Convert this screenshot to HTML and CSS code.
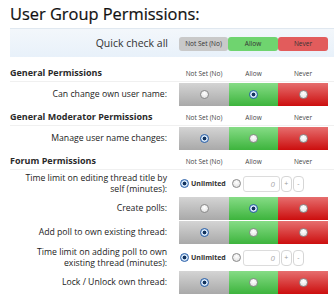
FILE: index.html
```html
<!DOCTYPE html>
<html lang="en">
<head>
  <meta charset="UTF-8" />
  <title>User Group Permissions</title>
  <link rel="stylesheet" href="styles.css">
</head>
<body>
  <div class="page">
    <h1>User Group Permissions:</h1>

    <div class="quick">
      <span class="quick-label">Quick check all</span>
      <div class="quick-btns">
        <span class="qbtn unset">Not Set (No)</span>
        <span class="qbtn allow">Allow</span>
        <span class="qbtn never">Never</span>
      </div>
    </div>

    <div class="section first">
      <div class="head">
        <span class="head-title">General Permissions</span>
        <span class="col-label">Not Set (No)</span>
        <span class="col-label">Allow</span>
        <span class="col-label">Never</span>
      </div>
      <div class="row">
        <span class="label">Can change own user name:</span>
        <span class="cell unset"><i class="radio"></i></span>
        <span class="cell allow"><i class="radio on"></i></span>
        <span class="cell never"><i class="radio"></i></span>
      </div>
    </div>

    <div class="section">
      <div class="head">
        <span class="head-title">General Moderator Permissions</span>
        <span class="col-label">Not Set (No)</span>
        <span class="col-label">Allow</span>
        <span class="col-label">Never</span>
      </div>
      <div class="row">
        <span class="label">Manage user name changes:</span>
        <span class="cell unset"><i class="radio on"></i></span>
        <span class="cell allow"><i class="radio"></i></span>
        <span class="cell never"><i class="radio"></i></span>
      </div>
    </div>

    <div class="section">
      <div class="head">
        <span class="head-title">Forum Permissions</span>
        <span class="col-label">Not Set (No)</span>
        <span class="col-label">Allow</span>
        <span class="col-label">Never</span>
      </div>
      <div class="row timed">
        <span class="label">Time limit on editing thread title by self (minutes):</span>
        <div class="limit">
          <i class="radio on"></i><b>Unlimited</b>
          <i class="radio"></i>
          <span class="num">0</span>
          <span class="step">+</span>
          <span class="step">-</span>
        </div>
      </div>
      <div class="row">
        <span class="label">Create polls:</span>
        <span class="cell unset"><i class="radio"></i></span>
        <span class="cell allow"><i class="radio on"></i></span>
        <span class="cell never"><i class="radio"></i></span>
      </div>
      <div class="row">
        <span class="label">Add poll to own existing thread:</span>
        <span class="cell unset"><i class="radio on"></i></span>
        <span class="cell allow"><i class="radio"></i></span>
        <span class="cell never"><i class="radio"></i></span>
      </div>
      <div class="row timed">
        <span class="label">Time limit on adding poll to own existing thread (minutes):</span>
        <div class="limit">
          <i class="radio on"></i><b>Unlimited</b>
          <i class="radio"></i>
          <span class="num">0</span>
          <span class="step">+</span>
          <span class="step">-</span>
        </div>
      </div>
      <div class="row">
        <span class="label">Lock / Unlock own thread:</span>
        <span class="cell unset"><i class="radio on"></i></span>
        <span class="cell allow"><i class="radio"></i></span>
        <span class="cell never"><i class="radio"></i></span>
      </div>
    </div>
  </div>
</body>
</html>
```

FILE: styles.css
```css
* { box-sizing: border-box; }

body {
  margin: 0;
  background: #fff;
  font-family: "Open Sans", "DejaVu Sans", sans-serif;
  color: #222;
  overflow: hidden;
}

.page {
  padding-left: 10px;
}

h1 {
  margin: 0;
  height: 28px;
  padding-top: 2px;
  font-size: 16.4px;
  font-weight: normal;
  line-height: 24px;
  color: #111;
  -webkit-text-stroke: 0.2px #111;
}

.quick {
  height: 29px;
  display: flex;
  align-items: center;
  background: linear-gradient(#f3f7fb, #e8f1fa);
  border-top: 1px solid #e0e8f0;
}

.quick-label {
  width: 169px;
  text-align: right;
  padding-right: 11px;
  font-size: 10.5px;
  color: #333;
}

.quick-btns {
  display: flex;
  margin-top: 1px;
}

.qbtn {
  width: 50px;
  height: 14px;
  line-height: 14px;
  border-radius: 3px;
  text-align: center;
  font-size: 6.5px;
  color: #333;
}

.qbtn.unset { width: 49px; background: #c9c9c9; }
.qbtn.allow { background: #6fd46f; }
.qbtn.never { background: #e25c5c; }

.section.first { margin-top: 5px; }

.head {
  display: grid;
  grid-template-columns: 169px 50px 49px 50px;
  align-items: end;
  height: 20px;
  padding-bottom: 2px;
  border-bottom: 1px solid #f0f0f0;
}

.head-title {
  font-size: 9px;
  font-weight: bold;
  color: #2a2a2a;
}

.col-label {
  text-align: center;
  font-size: 6.5px;
  color: #444;
  padding-bottom: 1px;
}

.row {
  display: grid;
  grid-template-columns: 169px 50px 49px 50px;
  height: 23px;
  margin-top: 1px;
}

.label {
  align-self: center;
  text-align: right;
  padding-right: 12px;
  font-size: 8.7px;
  line-height: 11px;
  color: #222;
}

.row.timed { height: 25px; }

.cell {
  display: flex;
  align-items: center;
  justify-content: center;
}

.cell.unset { background: linear-gradient(#d4d4d4, #a9a9a9); }
.cell.allow { background: linear-gradient(#86dc86, #3db43d); }
.cell.never { background: linear-gradient(#e66e6e, #cc0e0e); }

.radio {
  display: inline-block;
  width: 9px;
  height: 9px;
  border-radius: 50%;
  border: 1px solid #8a8a8a;
  background: radial-gradient(circle at 50% 35%, #fff, #dcdcdc);
}

.radio.on {
  border-color: #2a5fa8;
  background: radial-gradient(circle, #12335e 0 1.6px, #d8e8f8 2.2px, #a9c8ea);
}

.limit {
  grid-column: 2 / 5;
  display: flex;
  align-items: center;
  padding-left: 1px;
  font-size: 7px;
}

.limit b {
  margin-left: 2px;
  margin-right: 6px;
  font-weight: bold;
  color: #333;
}

.num {
  width: 37px;
  height: 16px;
  margin-left: 2px;
  border: 1px solid #dcdcdc;
  border-radius: 3px;
  text-align: right;
  padding-right: 4px;
  line-height: 14px;
  font-size: 8px;
  font-style: italic;
  color: #aaa;
}

.step {
  width: 11px;
  height: 16px;
  margin-left: 1px;
  border: 1px solid #d6d6d6;
  border-radius: 4px;
  text-align: center;
  line-height: 14px;
  font-size: 7px;
  color: #999;
}
```
